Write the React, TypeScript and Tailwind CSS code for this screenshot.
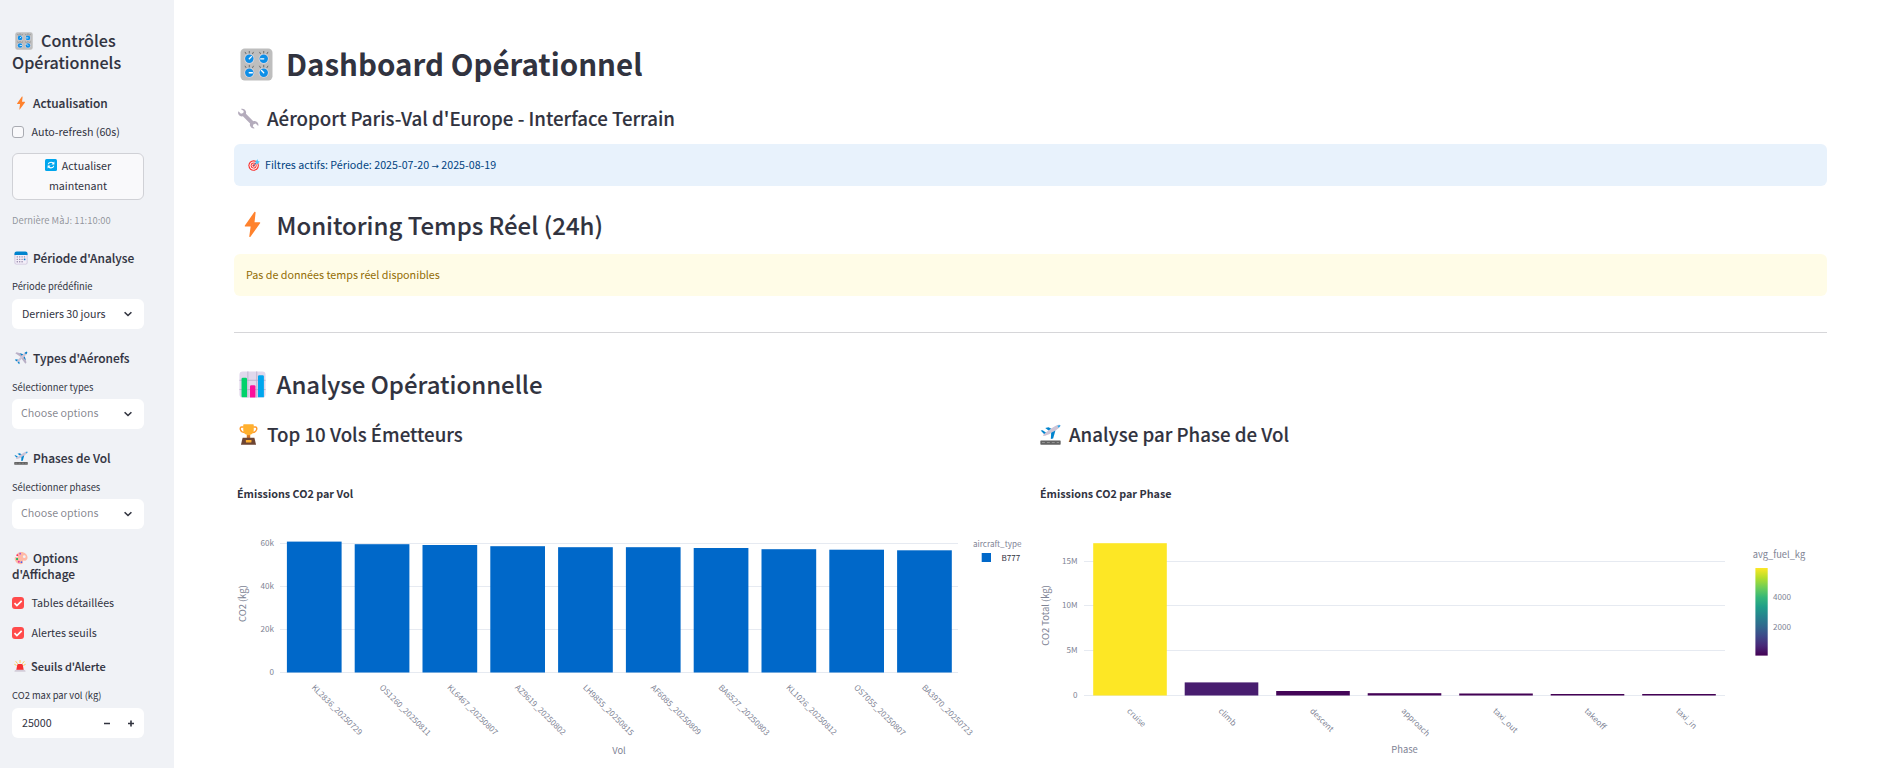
import React from "react";

type IconProps = { className?: string };

const Svg = ({ className = "", children }: IconProps & { children: React.ReactNode }) => (
  <svg viewBox="0 0 32 32" className={"inline-block shrink-0 " + className}>
    {children}
  </svg>
);

const knobs = [
  { x: 9, y: 10.5, a: -45 },
  { x: 23, y: 10.5, a: -180 },
  { x: 9, y: 24, a: 0 },
  { x: 23, y: 24, a: -135 },
];

const Knobs = (p: IconProps) => (
  <Svg {...p}>
    <rect x="0.5" y="0.5" width="31" height="31" rx="4" fill="#bebebe" />
    {knobs.map((k) => (
      <g key={`${k.x}-${k.y}`} transform={`translate(${k.x} ${k.y})`}>
        <circle r="4.9" fill="#d9d4dd" />
        <circle r="4.1" fill="#0d8fe8" />
        <path d="M0 0H3" stroke="#fff" strokeWidth="1.3" strokeLinecap="round" transform={`rotate(${k.a})`} />
        <path d="M0 -5.6V-7.2M-3.2 -5L-4 -6.4M3.2 -5L4 -6.4" stroke="#5c5c5c" strokeWidth="0.8" strokeLinecap="round" />
      </g>
    ))}
  </Svg>
);

const Bolt = (p: IconProps) => (
  <Svg {...p}>
    <path d="M18.2 1.2L7 17.3c-.4.6-.1 1.2.6 1.2h6.2L12.2 30c-.1.9.9 1.2 1.4.5L25 14.6c.4-.6.1-1.2-.6-1.2h-6L19.7 1.9c.1-.9-1-1.4-1.5-.7z" fill="#ff822d" />
  </Svg>
);

const Wrench = (p: IconProps) => (
  <Svg {...p}>
    <path d="M4.3 1.6c3.2-1.4 7 .6 7.9 4 .3 1.2.2 2.2-.1 3.2l11.2 11.3c3-.9 6.3.7 7.4 3.6.5 1.2.5 2.5.1 3.7l-3.9-3.6-3.6 1.2-.7 3.2 3 2.8c-3 .8-6.2-.8-7.2-3.8-.4-1.2-.4-2.3 0-3.5L7.5 12.7c-2.8.8-6-.8-7-3.6C0 7.8 0 6.4.6 5.1l3.9 3.7 3.5-1 .8-3.3z" fill="#b4acbc" />
  </Svg>
);

const Target = (p: IconProps) => (
  <Svg {...p}>
    <circle cx="15" cy="17.5" r="14" fill="#f8312f" />
    <circle cx="15" cy="17.5" r="11" fill="#fff" />
    <circle cx="15" cy="17.5" r="8" fill="#f8312f" />
    <circle cx="15" cy="17.5" r="5.5" fill="#fff" />
    <circle cx="15" cy="17.5" r="3.2" fill="#f8312f" />
    <path d="M15 17.5L24 8.5" stroke="#0084ce" strokeWidth="2" strokeLinecap="round" />
    <path d="M19.5 7.5L25.5 0.5l1 5L31.5 6.5 25.5 13l-5-.8z" fill="#50c5f5" />
  </Svg>
);

const BarChart = (p: IconProps) => (
  <Svg {...p}>
    <rect x="0.5" y="0.5" width="31" height="31" rx="4" fill="#e1d8ec" />
    <path d="M10.5 .5v31M21 .5v31M.5 11h31M.5 22h31" stroke="#b8adc8" strokeWidth="1" />
    <path d="M3 9.5Q3 8 4.5 8H8q1.5 0 1.5 1.5V31H4q-1 0-1-1z" fill="#00d26a" />
    <path d="M13 18.5q0-1.5 1.5-1.5H18q1.5 0 1.5 1.5V31.5H13z" fill="#fc0f9b" />
    <path d="M22.5 6.5q0-1.5 1.5-1.5h4q1.5 0 1.5 1.5V31h-7z" fill="#00a6ed" />
  </Svg>
);

const Trophy = (p: IconProps) => (
  <Svg {...p}>
    <path d="M9 4.5H5.5C2 4.5 2.5 12.5 10 13M23 4.5h3.5C30 4.5 29.5 12.5 22 13" stroke="#ff9a2b" strokeWidth="2.2" fill="none" />
    <path d="M8 1.5Q8 .5 9 .5H23q1 0 1 1V9c0 4-2.5 6.5-5.5 7.3V21h-5v-4.7C10.5 15.500 8 13 8 9z" fill="#ffb02e" />
    <path d="M13.5 17h5v4.5h-5z" fill="#d3762b" />
    <path d="M7 21h18l2.5 10.5h-23z" fill="#6d4534" />
    <rect x="12" y="24.5" width="8.5" height="3.5" rx=".5" fill="#ffb02e" />
  </Svg>
);

const Refresh = (p: IconProps) => (
  <Svg {...p}>
    <rect width="32" height="32" rx="4" fill="#00a6ed" />
    <path d="M8.5 14c.7-3.2 4-5.5 7.5-5.5 2.5 0 4.6 1 6 2.7M23.5 18c-.7 3.2-4 5.5-7.5 5.5-2.5 0-4.6-1-6-2.7" stroke="#fff" strokeWidth="3" fill="none" />
    <path d="M25 6.5v8h-8zM7 25.5v-8h8z" fill="#fff" />
  </Svg>
);

const Calendar = (p: IconProps) => (
  <Svg {...p}>
    <rect x="1" y="2" width="30" height="29" rx="4" fill="#cfc6dd" />
    <rect x="3" y="9" width="26" height="20" rx="2" fill="#f3eef8" />
    <path d="M1 9V6q0-5 5-5h20q5 0 5 5v3z" fill="#0084ce" />
    <g fill="#9b8fae">
      {[12, 17.5, 23].map((y) =>
        [6, 11.5, 17, 22.5].map((x) => (y === 23 && x > 20 ? null : <rect key={`${x}-${y}`} x={x} y={y} width="3" height="3" rx=".6" />)),
      )}
    </g>
    <rect x="22.5" y="17.5" width="3.5" height="3.5" fill="#0084ce" />
  </Svg>
);

const Airplane = (p: IconProps) => (
  <Svg {...p}>
    <path d="M2 20.5l2-1.5 6 1 1.5 2L13 28l-1.5 2-4-5.5z" fill="#0084ce" />
    <path d="M3 5l3-2 15.5 4.5-5 7zM24 11l4.5 15-2.5 3-9-12z" fill="#b9b0c6" />
    <path d="M13 5.2l8.5 2.3-3 4zM24.5 12.5L27 21l-5-5.5z" fill="#0084ce" />
    <path d="M7 22.5L22 6c3-3.5 7-5 8-4s-.5 5-4 8L10 25c-2 1.5-4.5-.5-3-2.5z" fill="#cdc4d6" />
    <path d="M24 4.5C27 1.7 29.3 1.3 30 2s0 3-2 5.5z" fill="#0084ce" />
  </Svg>
);

const Takeoff = (p: IconProps) => (
  <Svg {...p}>
    <rect x="0.5" y="25" width="31" height="6.5" rx="1" fill="#636363" />
    <path d="M3 28.2h4.5M10.5 28.2h4.5M18 28.2h4.5M25.5 28.2H29" stroke="#a5a5a5" strokeWidth="1.1" />
    <path d="M8 6l5-1 8 4-5 3zM1 10l3-.5 5.5 4-3 2z" fill="#0084ce" />
    <path d="M5 16.5C9 12.5 22 3 27 1.5c3-.8 4.5.2 4 1.7C30 7 14 16.5 8 18c-3 .7-4.3-.2-3-1.5z" fill="#cdc4d6" />
    <path d="M17 13.5l6.5-3.7L20 22l-3.5 1z" fill="#0084ce" />
    <path d="M26.5 2.5l4.3-.8c.6 1.5-.8 2.8-2.3 3.9z" fill="#26a9ef" />
  </Svg>
);

const Palette = (p: IconProps) => (
  <Svg {...p}>
    <path d="M16 2C24.5 2 31 8 31 15c0 5-3.5 7.500-7 7-2.5-.5-4 .5-3.500 3 .5 3-1.500 5-5 5C7.500 30 1.500 24 1.500 16.500c0-3 3-3.500 5-2.500 2 .8 3-1.500 1.500-3.500C5 6 10 2 16 2z" fill="#ffb8a5" />
    <circle cx="23.5" cy="13" r="3.2" fill="#f0f2f6" />
    <circle cx="7.5" cy="9.5" r="2.2" fill="#f92f60" />
    <circle cx="14" cy="6" r="2" fill="#9b4fe0" />
    <circle cx="7" cy="18.5" r="2.4" fill="#00b45a" />
    <circle cx="11" cy="24.5" r="2.2" fill="#e0389c" />
    <circle cx="17" cy="25.5" r="2" fill="#4b5ff0" />
  </Svg>
);

const Siren = (p: IconProps) => (
  <Svg {...p}>
    <path d="M16 1v6M5 4l4 5M27 4l-4 5M2 12l4 2M30 12l-4 2" stroke="#ffc83d" strokeWidth="2.4" strokeLinecap="round" />
    <path d="M6 27l2.500-13.500q.5-3 3.500-3h8q3 0 3.500 3L26 27z" fill="#f8312f" />
    <path d="M1 31.500q0-5.500 5-5.500h20q5 0 5 5.500z" fill="#d3ccd9" />
  </Svg>
);

const Chevron = () => (
  <svg viewBox="0 0 10 10" className="h-[10px] w-[10px]">
    <path d="M1.6 3.2L5 6.5 8.4 3.2" fill="none" stroke="#31333f" strokeWidth="1.6" />
  </svg>
);

const SideHeading = ({ icon, children }: { icon: React.ReactNode; children: React.ReactNode }) => (
  <h3 className="flex h-4 items-center whitespace-nowrap pl-[2px] text-[11.95px] font-medium leading-4 [-webkit-text-stroke:0.1px]">
    {icon}
    {children}
  </h3>
);

const Label = ({ children }: { children: React.ReactNode }) => (
  <div className="h-4 whitespace-nowrap text-[9.4px] leading-4">{children}</div>
);

const Select = ({ value, muted }: { value: string; muted?: boolean }) => (
  <div
    className={
      "flex h-[30px] items-center justify-between rounded-[6px] bg-white pr-[11px] text-[10.7px] leading-4 " +
      (muted ? "pl-[9px] text-[#31333f]/60" : "pl-[10px]")
    }
  >
    <span className={"whitespace-nowrap " + (muted ? "pb-[3px]" : "pb-px")}>{value}</span>
    <Chevron />
  </div>
);

const Check = ({ on, children }: { on?: boolean; children: React.ReactNode }) => (
  <label className="flex h-4 items-center gap-[7.5px] whitespace-nowrap text-[10.7px] leading-4">
    {on ? (
      <span className="flex h-3 w-3 items-center justify-center rounded-[3px] bg-[#ff4b4b]">
        <svg viewBox="0 0 12 12" className="h-3 w-3">
          <path d="M2.5 6.2l2.4 2.4 4.8-4.8" fill="none" stroke="#fff" strokeWidth="1.7" />
        </svg>
      </span>
    ) : (
      <span className="h-3 w-3 rounded-[3px] border border-[#a9abb2] bg-[#f9f9fb]" />
    )}
    <span className="pb-px">{children}</span>
  </label>
);

const Sidebar = () => (
  <aside className="h-[768px] w-[174px] shrink-0 bg-[#f0f2f6] pl-3 pr-[30px] pt-[29px]">
    <h1 className="whitespace-nowrap text-[16.1px] font-medium leading-[22px] [-webkit-text-stroke:0.1px]">
      <Knobs className="ml-[3px] mr-[8px] h-[18px] w-[18px] align-[-3px]" />
      Contrôles
      <br />
      Opérationnels
    </h1>
    <div className="mt-[22px]">
      <SideHeading icon={<Bolt className="mr-[5px] h-[14px] w-[14px]" />}>Actualisation</SideHeading>
    </div>
    <div className="mt-[13px]">
      <Check>Auto-refresh (60s)</Check>
    </div>
    <button className="mt-[13px] block h-[47px] w-[132px] rounded-[6px] border border-[#d0d1d6] bg-[#f9f9fb] pb-[2px] text-center text-[10.7px] leading-5">
      <Refresh className="mr-[5px] h-3 w-3 align-[-1.5px]" />
      Actualiser
      <br />
      maintenant
    </button>
    <div className="mt-3 h-4 whitespace-nowrap text-[9.4px] leading-4 text-[#31333f]/50">Dernière MàJ: 11:10:00</div>
    <div className="mt-[22px]">
      <SideHeading icon={<Calendar className="mr-[5px] h-[14px] w-[14px]" />}>Période d'Analyse</SideHeading>
    </div>
    <div className="mt-3">
      <Label>Période prédéfinie</Label>
    </div>
    <div className="mt-[5px]">
      <Select value="Derniers 30 jours" />
    </div>
    <div className="mt-[21px]">
      <SideHeading icon={<Airplane className="mr-[5px] h-[14px] w-[14px]" />}>Types d'Aéronefs</SideHeading>
    </div>
    <div className="mt-[13px]">
      <Label>Sélectionner types</Label>
    </div>
    <div className="mt-1">
      <Select value="Choose options" muted />
    </div>
    <div className="mt-[21px]">
      <SideHeading icon={<Takeoff className="mr-[5px] h-[14px] w-[14px]" />}>Phases de Vol</SideHeading>
    </div>
    <div className="mt-[13px]">
      <Label>Sélectionner phases</Label>
    </div>
    <div className="mt-1">
      <Select value="Choose options" muted />
    </div>
    <div className="mt-[21px]">
      <SideHeading icon={<Palette className="mr-[5px] h-[14px] w-[14px]" />}>Options</SideHeading>
      <h3 className="h-4 whitespace-nowrap text-[11.95px] font-medium leading-4 [-webkit-text-stroke:0.1px]">d'Affichage</h3>
    </div>
    <div className="mt-[13px] flex flex-col gap-[14px]">
      <Check on>Tables détaillées</Check>
      <Check on>Alertes seuils</Check>
    </div>
    <h4 className="mt-[17px] flex h-4 items-center whitespace-nowrap pl-[2px] text-[11px] font-medium leading-4 [-webkit-text-stroke:0.1px]">
      <Siren className="mr-[5px] h-3 w-3" />
      Seuils d'Alerte
    </h4>
    <div className="mt-[13px]">
      <Label>CO2 max par vol (kg)</Label>
    </div>
    <div className="mt-[5px] flex h-[30px] items-center rounded-[6px] bg-white pl-[10px] pr-[9px] text-[10.7px] leading-4">
      <span className="flex-1 pb-px">25000</span>
      <svg viewBox="0 0 32 8" className="h-2 w-8">
        <path d="M1 4.5h6M25 4.5h6M28 1.5v6" stroke="#31333f" strokeWidth="1.6" fill="none" />
      </svg>
    </div>
  </aside>
);

const flights = [
  { id: "KL2836_20250729", top: 541.6 },
  { id: "OS1260_20250811", top: 544.2 },
  { id: "KL6467_20250807", top: 545 },
  { id: "AZ9619_20250802", top: 546.2 },
  { id: "LH9855_20250815", top: 547.2 },
  { id: "AF6085_20250809", top: 547.2 },
  { id: "BA6527_20250803", top: 548 },
  { id: "KL1026_20250812", top: 549.2 },
  { id: "OS7055_20250807", top: 549.7 },
  { id: "BA3970_20250723", top: 550.3 },
];

const FlightChart = () => (
  <svg viewBox="234 447 790 321" className="block h-[321px] w-[790px]">
    <text x="237" y="498" fontSize="10.75" fontWeight="700" fill="#31333f">Émissions CO2 par Vol</text>
    {[
      { y: 543.5, t: "60k" },
      { y: 586.5, t: "40k" },
      { y: 629.5, t: "20k" },
      { y: 672.5, t: "0" },
    ].map((g) => (
      <g key={g.t}>
        <path d={`M280 ${g.y}H958`} stroke="#e6eaf1" strokeWidth="1" />
        <text x="274" y={g.y + 2.8} textAnchor="end" fontSize="8.1" fill="#808495">{g.t}</text>
      </g>
    ))}
    {flights.map((f, i) => (
      <g key={f.id}>
        <rect x={286.9 + 67.8 * i} y={f.top} width="54.7" height={672.5 - f.top} fill="#0068c9" />
        <text transform={`translate(${311.2 + 67.8 * i} 688) rotate(45)`} fontSize="8.02" fill="#808495">{f.id}</text>
      </g>
    ))}
    <text x="619" y="754" textAnchor="middle" fontSize="9.4" fill="#808495">Vol</text>
    <text transform="translate(245.5 603.6) rotate(-90)" textAnchor="middle" fontSize="9.4" fill="#808495">CO2 (kg)</text>
    <text x="973" y="547" fontSize="8.1" fill="#808495">aircraft_type</text>
    <rect x="981.7" y="553" width="9.3" height="9" fill="#0068c9" />
    <text x="1001.5" y="561" fontSize="8.05" fill="#31333f">B777</text>
  </svg>
);

const phases = [
  { id: "cruise", top: 543.2, c: "#fde725" },
  { id: "climb", top: 682.4, c: "#481d6f" },
  { id: "descent", top: 691, c: "#440558" },
  { id: "approach", top: 693.2, c: "#440256" },
  { id: "taxi_out", top: 693.5, c: "#440154" },
  { id: "takeoff", top: 694, c: "#440154" },
  { id: "taxi_in", top: 694, c: "#440154" },
];

const viridis = ["#fde725", "#b5de2b", "#6ece58", "#35b779", "#1f9e89", "#26828e", "#31688e", "#3e4989", "#482878", "#440154"];

const PhaseChart = () => (
  <svg viewBox="1036 447 791 321" className="block h-[321px] w-[791px]">
    <defs>
      <linearGradient id="viridis" x1="0" y1="0" x2="0" y2="1">
        {viridis.map((c, i) => (
          <stop key={c} offset={i / 9} stopColor={c} />
        ))}
      </linearGradient>
    </defs>
    <text x="1040" y="498" fontSize="10.75" fontWeight="700" fill="#31333f">Émissions CO2 par Phase</text>
    {[
      { y: 561.5, t: "15M" },
      { y: 605.5, t: "10M" },
      { y: 650.5, t: "5M" },
      { y: 695.5, t: "0" },
    ].map((g) => (
      <g key={g.t}>
        <path d={`M1084 ${g.y}H1725`} stroke="#e6eaf1" strokeWidth="1" />
        <text x="1077.5" y={g.y + 2.8} textAnchor="end" fontSize="8.1" fill="#808495">{g.t}</text>
      </g>
    ))}
    {phases.map((f, i) => (
      <g key={f.id}>
        <rect x={1093.2 + 91.5 * i} y={f.top} width="73.6" height={695.5 - f.top} fill={f.c} />
        <text transform={`translate(${1126.5 + 91.5 * i} 711.5) rotate(45)`} fontSize="8.1" fill="#808495">{f.id}</text>
      </g>
    ))}
    <text x="1404.5" y="753" textAnchor="middle" fontSize="9.4" fill="#808495">Phase</text>
    <text transform="translate(1048.7 615.4) rotate(-90)" textAnchor="middle" fontSize="9.4" fill="#808495">CO2 Total (kg)</text>
    <text x="1752.7" y="558" fontSize="9.3" fill="#808495">avg_fuel_kg</text>
    <rect x="1755.4" y="568" width="12.3" height="87.6" fill="url(#viridis)" />
    <text x="1773" y="600" fontSize="8.1" fill="#808495">4000</text>
    <text x="1773" y="630" fontSize="8.1" fill="#808495">2000</text>
  </svg>
);

export default function App() {
  return (
    <div className="flex h-[768px] w-[1879px] overflow-hidden bg-white text-[#31333f] [font-family:'Noto_Sans_CJK_SC',sans-serif]">
      <Sidebar />
      <main className="flex w-[1705px] flex-col pl-[60px] pr-[52px] pt-[44px]">
        <h1 className="flex h-10 items-center whitespace-nowrap pl-[6px] text-[29.5px] font-bold leading-10">
          <Knobs className="mr-[13px] h-[33px] w-[33px]" />
          <span className="pb-[2px]">Dashboard Opérationnel</span>
        </h1>
        <h3 className="mt-[21px] flex h-[26px] items-center whitespace-nowrap pl-1 text-[18.68px] font-medium leading-[26px] [-webkit-text-stroke:0.12px]">
          <Wrench className="mr-[8px] h-[21px] w-[21px]" />
          Aéroport Paris-Val d'Europe - Interface Terrain
        </h3>
        <div className="mt-[13px] flex h-[42px] items-center whitespace-nowrap rounded-[6px] bg-[#e8f2fc] pl-[14px] text-[10.7px] leading-4 text-[#004280]">
          <Target className="mr-[5px] h-3 w-3" />
          <span className="pb-px">
            Filtres actifs: Période: 2025-07-20{" "}
            <span className="text-[8.8px] leading-none [font-family:'DejaVu_Sans',sans-serif]">→</span> 2025-08-19
          </span>
        </div>
        <h2 className="mt-[23px] flex h-8 items-center whitespace-nowrap pl-[5px] text-[23.97px] font-medium leading-8 [-webkit-text-stroke:0.12px]">
          <Bolt className="mr-[10.5px] h-[27px] w-[27px] -mt-px" />
          Monitoring Temps Réel (24h)
        </h2>
        <div className="mt-[13px] flex h-[42px] items-center whitespace-nowrap rounded-[6px] bg-[#fffce7] pl-3 text-[10.75px] leading-4 text-[#926c05]">
          <span className="pb-px">Pas de données temps réel disponibles</span>
        </div>
        <hr className="mt-9 h-px border-0 bg-[#d6d6d9]" />
        <h2 className="mt-[35px] flex h-8 items-center whitespace-nowrap pl-[5px] text-[23.97px] font-medium leading-8 [-webkit-text-stroke:0.12px]">
          <BarChart className="mr-[10.5px] h-[27px] w-[27px]" />
          Analyse Opérationnelle
        </h2>
        <div className="mt-[21px] flex gap-3">
          <section className="w-[790px]">
            <h3 className="flex h-[26px] items-center whitespace-nowrap pl-1 text-[18.68px] font-medium leading-[26px] [-webkit-text-stroke:0.12px]">
              <Trophy className="mr-[8px] h-[21px] w-[21px]" />
              Top 10 Vols Émetteurs
            </h3>
            <FlightChart />
          </section>
          <section className="w-[791px]">
            <h3 className="flex h-[26px] items-center whitespace-nowrap pl-1 text-[18.68px] font-medium leading-[26px] [-webkit-text-stroke:0.12px]">
              <Takeoff className="mr-[8px] h-[21px] w-[21px]" />
              Analyse par Phase de Vol
            </h3>
            <PhaseChart />
          </section>
        </div>
      </main>
    </div>
  );
}
